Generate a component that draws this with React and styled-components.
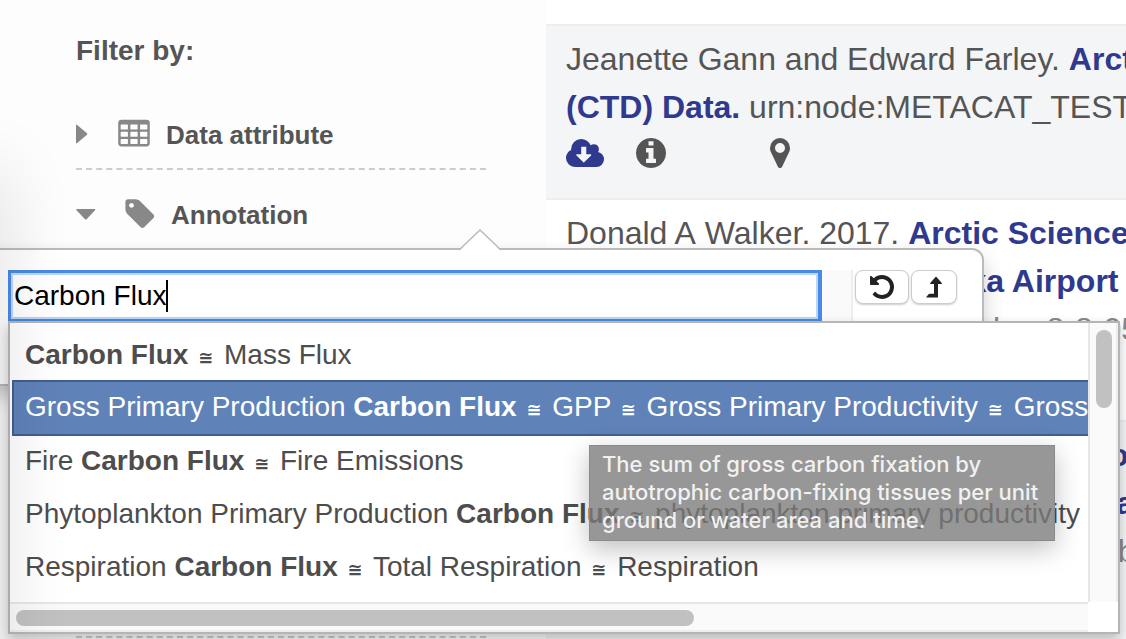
import React from "react";
import styled, { createGlobalStyle, css } from "styled-components";

const sans = `"Liberation Sans", Arial, Helvetica, sans-serif`;

const Global = createGlobalStyle`
  *, *::before, *::after { box-sizing: border-box; }
  html, body { margin: 0; background: #fff; }
  body { font-family: ${sans}; color: #555; overflow: hidden; }
  button, input { font: inherit; color: inherit; }
`;

const Page = styled.div`
  position: relative;
  display: flex;
  height: 100vh;
  overflow: hidden;
  isolation: isolate;
`;

const EdgeShadow = styled.div`
  position: absolute;
  z-index: 5;
  left: -40px;
  top: 170px;
  bottom: -80px;
  width: 40px;
  box-shadow: 0 0 70px rgba(0, 0, 0, 0.16);
  pointer-events: none;
`;

/* Sidebar */

const Sidebar = styled.aside`
  flex: none;
  width: 546px;
  padding: 33px 60px 0 76px;
  background: #fdfdfd;
`;

const SidebarTitle = styled.h2`
  margin: 0 0 49px;
  font-size: 28px;
  line-height: 36px;
`;

const FilterRow = styled.button`
  display: flex;
  align-items: flex-start;
  width: 100%;
  height: ${(p) => (p.$open ? "440px" : "52px")};
  margin-bottom: 28px;
  padding: 0;
  border: 0;
  border-bottom: 2px dashed #ccc;
  background: none;
  text-align: left;
`;

const FilterLabel = styled.span`
  font-size: 26px;
  font-weight: bold;
  line-height: 34px;
`;

const Caret = styled.svg`
  flex: none;
  width: 20px;
  height: 34px;
  fill: #888;
`;

const FilterIcon = styled.svg`
  flex: none;
  width: 34px;
  height: 34px;
  margin: 0 ${(p) => p.$gap} 0 ${(p) => p.$lead};
  fill: #888;
`;

/* Results */

const Results = styled.main`
  flex: 1;
  min-width: 0;
  padding-top: 24px;
  overflow: hidden;
`;

const Result = styled.article`
  padding: 9px 20px;
  border-top: 2px solid #eee;
  background: ${(p) => (p.$striped ? "#f4f5f7" : "#fff")};
  font-size: 32px;
  line-height: 48px;
  white-space: nowrap;
`;

const Line = styled.div`
  height: 48px;
  color: ${(p) => (p.$muted ? "#888" : "inherit")};
`;

const TitleLink = styled.a`
  color: #2f3a8f;
  font-weight: bold;
  text-decoration: none;
`;

const Actions = styled.div`
  display: flex;
  align-items: flex-start;
  height: 58px;
`;

const ActionButton = styled.button`
  display: flex;
  align-items: center;
  height: 44px;
  padding: 0;
  margin-right: ${(p) => p.$after || "0"};
  border: 0;
  background: none;
  color: ${(p) => (p.$primary ? "#2f3a8f" : "#555")};

  svg {
    display: block;
    fill: currentColor;
  }
`;

/* Popover */

const Popover = styled.section`
  position: absolute;
  z-index: 2;
  top: 248px;
  left: -40px;
  width: 1024px;
  height: 138px;
  padding: 20px 25px 0 46px;
  display: flex;
  align-items: flex-start;
  border: 2px solid #bbb;
  border-radius: 12px;
  background: #fff;
  box-shadow: 0 10px 20px rgba(0, 0, 0, 0.2);
`;

const Arrow = styled.svg`
  position: absolute;
  left: 496px;
  top: -21px;
  width: 44px;
  height: 22px;
`;

const SearchInput = styled.input`
  flex: none;
  width: 814px;
  height: 52px;
  padding: 0 3px;
  border: 3px solid #4a8ae3;
  border-right-width: 4px;
  outline: none;
  background: #fff;
  box-shadow: inset 0 0 0 2px #bdd7fb;
  color: #000;
  font-size: 28px;
  line-height: 36px;
  caret-color: transparent;
`;

const TextCaret = styled.span`
  position: absolute;
  left: 204px;
  top: 30px;
  width: 2px;
  height: 32px;
  background: #000;
`;

const Track = styled.div`
  flex: 1;
  align-self: stretch;
  border-right: 2px solid #eee;
  background: #fafafa;
`;

const ToolButton = styled.button`
  flex: none;
  display: grid;
  place-items: center;
  width: ${(p) => p.$width};
  height: 34px;
  margin-left: 2px;
  padding: 0;
  border: 1px solid #ccc;
  border-radius: 8px;
  background: #fff;
  box-shadow: 0 1px 2px rgba(0, 0, 0, 0.2);
  color: #222;

  svg {
    display: block;
    fill: currentColor;
  }
`;

/* Suggestions */

const Suggestions = styled.div`
  position: absolute;
  z-index: 3;
  top: 321px;
  left: 8px;
  right: 6px;
  display: grid;
  grid-template-columns: minmax(0, 1fr) 30px;
  grid-template-rows: 279px 30px;
  border: 2px solid #b5b5b5;
  background: #fff;
  box-shadow: 0 6px 12px rgba(0, 0, 0, 0.24);
`;

const Options = styled.ul`
  margin: 0;
  padding: 5px 0 0 2px;
  overflow: hidden;
  list-style: none;
  color: #4d4d4d;
  font-size: 28px;
`;

const Option = styled.li`
  width: max-content;
  min-width: 100%;
  height: 53px;
  padding: 0 13px;
  line-height: 54px;
  white-space: nowrap;

  ${(p) =>
    p.$selected &&
    css`
      height: 56px;
      margin: -1px 0 -2px;
      padding: 0 11px;
      border: 2px solid #40608f;
      background: #5f82b9;
      color: #fff;
      line-height: 50px;
    `}
`;

const Approx = styled.span`
  margin: 0 3px 0 2px;
  font-family: "DejaVu Sans", sans-serif;
  font-size: 18px;
  font-weight: bold;
  line-height: 1;
`;

const ScrollY = styled.div`
  padding: 7px 6px;
  border-left: 2px solid #e7e7e7;
  border-right: 2px solid #eee;
  background: #fafafa;
`;

const ScrollX = styled.div`
  padding: 6px;
  border-top: 2px solid #e7e7e7;
  border-bottom: 2px solid #eee;
  background: #fafafa;
`;

const Thumb = styled.div`
  width: ${(p) => p.$width};
  height: ${(p) => p.$height};
  border-radius: 8px;
  background: #c1c1c1;
`;

const Tooltip = styled.div`
  position: absolute;
  z-index: 4;
  top: 445px;
  left: 589px;
  width: 466px;
  padding: 4px 12px 6px;
  border: 1px solid #8a8a8a;
  background: rgba(122, 122, 122, 0.78);
  box-shadow: 0 8px 24px rgba(0, 0, 0, 0.25);
  color: #f1f1f1;
  font-family: Inter, "Liberation Sans", sans-serif;
  font-size: 22px;
  font-weight: 500;
  line-height: 28px;
  white-space: nowrap;
`;

const TABLE_PATH = [192, 704, 1216]
  .flatMap((x) =>
    [384, 768, 1152].map(
      (y) =>
        `M${x + 384} ${y + 224}v-192q0-14-9-23t-23-9h-320q-14 0-23 9t-9 23v192q0 14 9 23t23 9h320q14 0 23-9t9-23z`
    )
  )
  .join("");

const suggestions = [
  [["Carbon Flux", true], ["≅"], ["Mass Flux"]],
  [["Gross Primary Production "], ["Carbon Flux", true], ["≅"], ["GPP"], ["≅"], ["Gross Primary Productivity"], ["≅"], ["Gross Primary Production"]],
  [["Fire "], ["Carbon Flux", true], ["≅"], ["Fire Emissions"]],
  [["Phytoplankton Primary Production "], ["Carbon Flux", true], ["≅"], ["phytoplankton primary productivity"]],
  [["Respiration "], ["Carbon Flux", true], ["≅"], ["Total Respiration"], ["≅"], ["Respiration"]],
];

function Part({ text, bold }) {
  if (text === "≅") return <> <Approx>≅</Approx> </>;
  return bold ? <b>{text}</b> : <>{text}</>;
}

export default function App() {
  return (
    <Page>
      <Global />
      <Sidebar>
        <SidebarTitle>Filter by:</SidebarTitle>
        <FilterRow type="button" aria-expanded="false">
          <Caret viewBox="0 0 20 34" aria-hidden="true">
            <path d="M0 7.5Q0 6 1.2 7L11 15.200Q11.800 16 11 16.800L1.200 25Q0 26 0 24.500Z" />
          </Caret>
          <FilterIcon $lead="21px" $gap="15px" viewBox="0 40 1792 1792" aria-hidden="true">
            <path
              fillRule="evenodd"
              d={`M1728 288v1088q0 66-47 113t-113 47h-1344q-66 0-113-47t-47-113v-1088q0-66 47-113t113-47h1344q66 0 113 47t47 113z${TABLE_PATH}`}
            />
          </FilterIcon>
          <FilterLabel>Data attribute</FilterLabel>
        </FilterRow>
        <FilterRow type="button" $open aria-expanded="true">
          <Caret viewBox="0 0 20 34" aria-hidden="true">
            <path d="M1 11H18.500Q20 11 19 12.300L10.600 21.200Q9.800 22 9 21.200L.5 12.300Q-.5 11 1 11Z" />
          </Caret>
          <FilterIcon $lead="27px" $gap="14px" viewBox="0 60 1792 1792" aria-hidden="true">
            <path d="M576 448q0-53-37.500-90.500t-90.500-37.500-90.500 37.500-37.500 90.500 37.500 90.500 90.500 37.500 90.500-37.500 37.500-90.500zm1067 576q0 53-37 90l-491 492q-39 37-91 37-53 0-90-37l-715-716q-38-37-64.500-101t-26.500-117v-416q0-52 38-90t90-38h416q53 0 117 26.500t102 64.500l715 714q37 39 37 91z" />
          </FilterIcon>
          <FilterLabel>Annotation</FilterLabel>
        </FilterRow>
      </Sidebar>

      <Results>
        <Result $striped>
          <Line>
            Jeanette Gann and Edward Farley. <TitleLink href="#arctic-ctd">Arctic Ecosystem</TitleLink>
          </Line>
          <Line>
            <TitleLink href="#arctic-ctd">(CTD) Data.</TitleLink> urn:node:METACAT_TEST
          </Line>
          <Actions>
            <ActionButton type="button" $primary $after="32px" aria-label="Download">
              <svg width="38" height="28" viewBox="-64 128 1920 1408">
                <path d="M1216 928q0-14-9-23t-23-9h-224v-352q0-13-9.500-22.500t-22.500-9.500h-192q-13 0-22.500 9.500t-9.500 22.500v352h-224q-13 0-22.500 9.500t-9.500 22.500q0 14 9 23l352 352q9 9 23 9t23-9l351-351q10-12 10-24zm640 224q0 159-112.500 271.500t-271.500 112.500h-1088q-185 0-316.500-131.500t-131.500-316.500q0-130 70-240t188-165q-2-30-2-43 0-212 150-362t362-150q156 0 285.500 87t188.500 231q71-62 166-62 106 0 181 75t75 181q0 76-41 138 130 31 213.500 135.500t83.500 238.500z" />
              </svg>
            </ActionButton>
            <ActionButton type="button" $after="104px" aria-label="Information">
              <svg width="30" height="30" viewBox="128 128 1536 1536">
                <path d="M1152 1376v-160q0-14-9-23t-23-9h-96v-512q0-14-9-23t-23-9h-320q-14 0-23 9t-9 23v160q0 14 9 23t23 9h96v320h-96q-14 0-23 9t-9 23v160q0 14 9 23t23 9h448q14 0 23-9t9-23zm-128-896v-160q0-14-9-23t-23-9h-192q-14 0-23 9t-9 23v160q0 14 9 23t23 9h192q14 0 23-9t9-23zm640 416q0 209-103 385.500t-279.500 279.500-385.500 103-385.500-103-279.500-279.500-103-385.500 103-385.500 279.500-279.500 385.500-103 385.500 103 279.500 279.500 103 385.500z" />
              </svg>
            </ActionButton>
            <ActionButton type="button" aria-label="Location">
              <svg width="20" height="30" viewBox="384 128 1024 1536">
                <path d="M1152 640q0-106-75-181t-181-75-181 75-75 181 75 181 181 75 181-75 75-181zm256 0q0 109-33 179l-364 774q-16 33-47.500 52t-67.500 19-67.500-19-46.500-52l-365-774q-33-70-33-179 0-212 150-362t362-150 362 150 150 362z" />
              </svg>
            </ActionButton>
          </Actions>
        </Result>
        <Result>
          <Line>
            Donald A{"\u00a0"}Walker. 2017. <TitleLink href="#arctic-airport">Arctic Science</TitleLink>
          </Line>
          <Line>
            <TitleLink href="#arctic-airport">Research Deadhorse, Alaska Airport</TitleLink>
          </Line>
          <Line $muted>urn:uuid:4e1a7d2096be53e8abea8-8-05</Line>
          <Actions />
        </Result>
        <Result $striped>
          <Line>
            Donald A{"\u00a0"}Walker. 2017. <TitleLink href="#science-photo">Science Photo</TitleLink>
          </Line>
          <Line>
            <TitleLink href="#science-photo">Research Deadhorse, Alaska Field data</TitleLink>
          </Line>
          <Line $muted>urn:uuid:4e1a7d2096be53e8a1d07e92b</Line>
          <Actions />
        </Result>
      </Results>

      <Popover>
        <Arrow viewBox="0 0 44 22" aria-hidden="true">
          <path d="M0 23L22 2L44 23Z" fill="#fff" />
          <path d="M1 21L22 1L43 21" fill="none" stroke="#bbb" strokeWidth="1.500" />
        </Arrow>
        <SearchInput aria-label="Search annotations" defaultValue="Carbon Flux" />
        <TextCaret />
        <Track />
        <ToolButton type="button" $width="54px" aria-label="Reset">
          <svg width="24" height="24" viewBox="128 128 1536 1536">
            <path d="M1664 896q0 156-61 298t-164 245-245 164-298 61q-172 0-327-72.500t-264-204.500q-7-10-6.500-22.500t8.500-20.500l137-138q10-9 25-9 16 2 23 12 73 95 179 147t225 52q104 0 198.500-40.500t163.500-109.500 109.500-163.500 40.500-198.500-40.500-198.500-109.500-163.500-163.500-109.500-198.500-40.500q-98 0-188 35.500t-160 101.500l137 138q31 30 14 69-17 40-59 40h-448q-26 0-45-19t-19-45v-448q0-42 40-59 39-17 69 14l130 129q107-101 244.500-156.500t284.500-55.500q156 0 298 61t245 164 164 245 61 298z" />
          </svg>
        </ToolButton>
        <ToolButton type="button" $width="46px" aria-label="Up one level">
          <svg width="16" height="22" viewBox="0 0 16 22">
            <path d="M10 .4L15.800 7Q16.200 8 15.200 8H12V21.500H.8Q0 21.500 .5 20.800L2.600 18.200Q3 17.800 3.500 17.800H8V8H4.800Q3.800 8 4.200 7Z" />
          </svg>
        </ToolButton>
      </Popover>

      <Suggestions>
        <Options role="listbox" aria-label="Suggestions">
          {suggestions.map((parts, i) => (
            <Option key={i} role="option" aria-selected={i === 1} $selected={i === 1}>
              {parts.map(([text, bold], j) => (
                <Part key={j} text={text} bold={bold} />
              ))}
            </Option>
          ))}
        </Options>
        <ScrollY>
          <Thumb $width="16px" $height="78px" />
        </ScrollY>
        <ScrollX>
          <Thumb $width="calc(64% - 4px)" $height="16px" />
        </ScrollX>
      </Suggestions>

      <Tooltip role="tooltip">
        The sum of gross carbon fixation by
        <br />
        autotrophic carbon-fixing tissues per unit
        <br />
        ground or water area and time.
      </Tooltip>
      <EdgeShadow />
    </Page>
  );
}
